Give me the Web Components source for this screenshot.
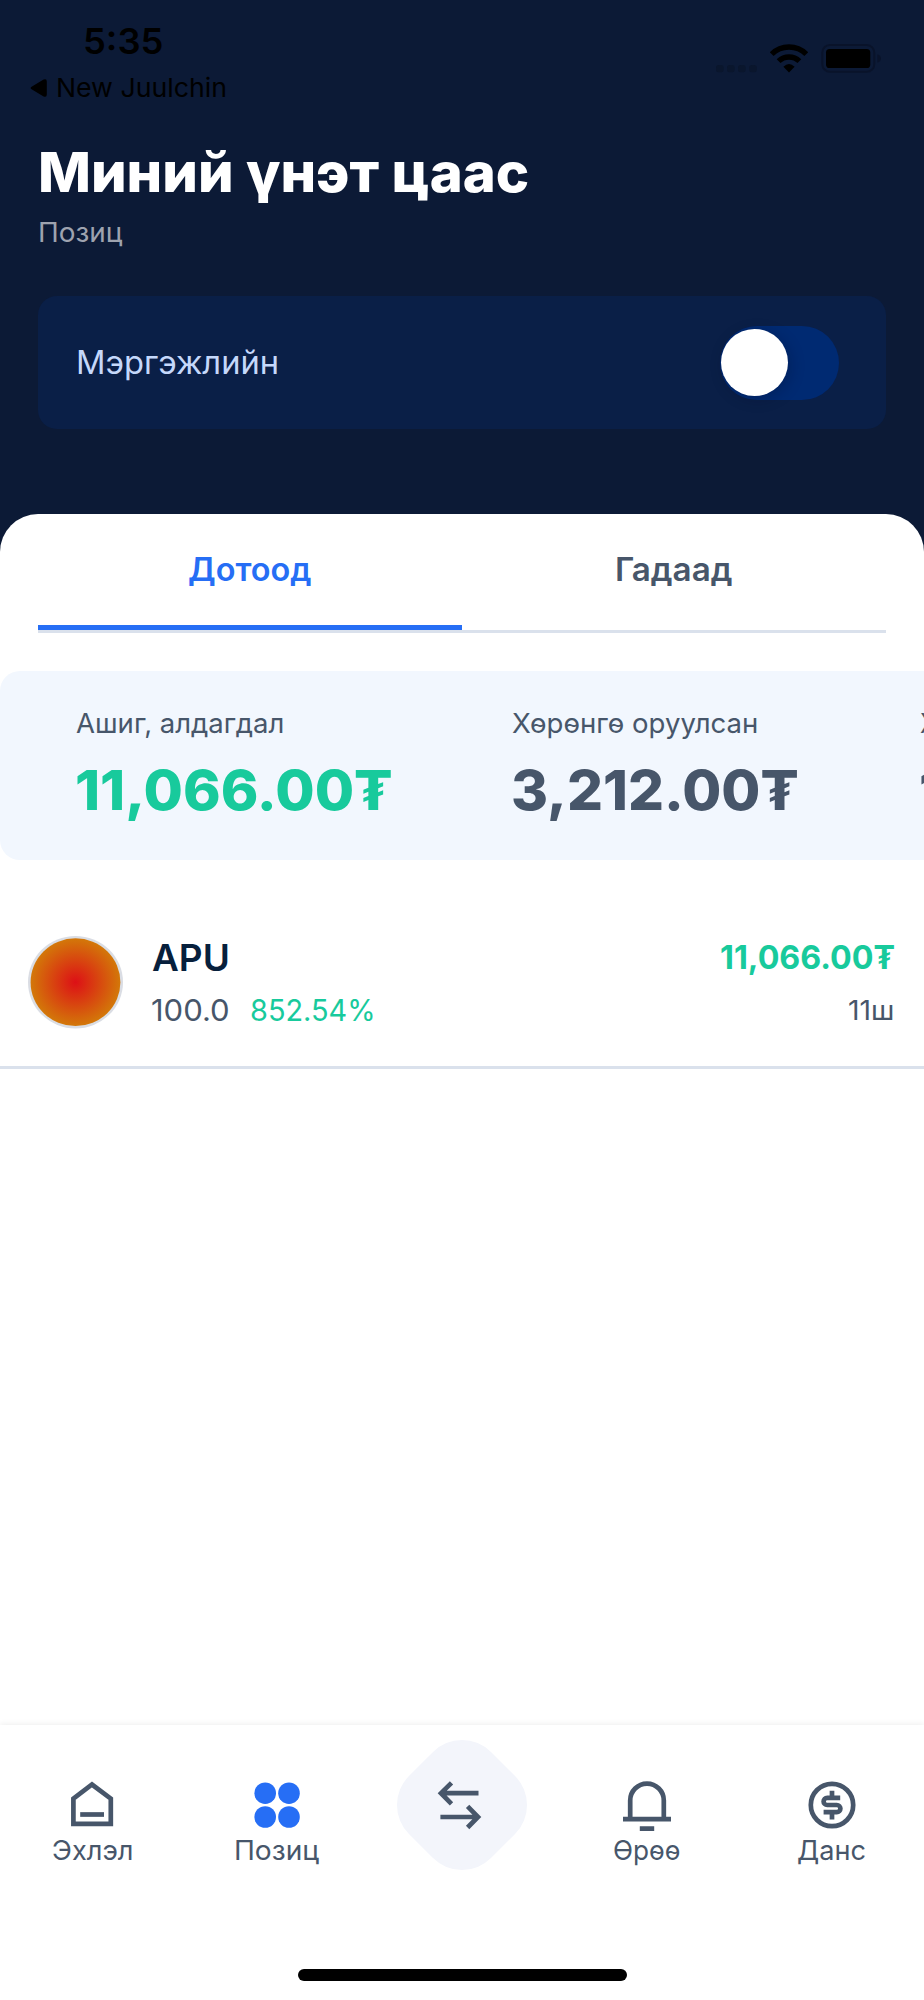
<!DOCTYPE html>
<html lang="mn">
<head>
<meta charset="utf-8">
<title>Миний үнэт цаас</title>
<style>
  html, body { margin: 0; background: #fff; overflow: hidden; }
  body { width: 924px; height: 2000px; font-family: Inter, Roboto, "Noto Sans", sans-serif; }
</style>
</head>
<body>
<portfolio-page></portfolio-page>

<script>
const define = (name, html, setup) => {
  const template = document.createElement('template');
  template.innerHTML = html.trim();
  customElements.define(name, class extends HTMLElement {
    constructor() {
      super();
      this.attachShadow({ mode: 'open' }).append(template.content.cloneNode(true));
    }
    connectedCallback() { if (setup) setup(this, this.shadowRoot); }
  });
};

/* A single line of text fitted to a given visible width; capitals sit in the middle of the line box. */
const pen = document.createElement('canvas').getContext('2d');
define('fit-text', `<style>
    :host { display: block; flex: none; white-space: nowrap; }
    span { display: block; width: max-content; transform-origin: 0 50%; }
  </style><span><slot></slot></span>`, (el, root) => {
  const size = el.getAttribute('size'), weight = el.getAttribute('weight') || 400;
  const line = el.getAttribute('line') || Math.round(size * 1.3);
  const width = +el.getAttribute('w');
  pen.font = `${weight} ${size}px Inter, Roboto, "Noto Sans", sans-serif`;
  const m = pen.measureText(el.textContent);
  const ratio = width / (m.actualBoundingBoxLeft + m.actualBoundingBoxRight);
  el.style.cssText += `;width:${width}px;height:${line}px;font-size:${size}px;font-weight:${weight};line-height:${line}px`;
  root.querySelector('span').style.transform =
    `translateX(${m.actualBoundingBoxLeft * ratio}px) scaleX(${ratio})`;
});

define('status-bar', `
  <style>
    :host { display: flex; justify-content: space-between; height: 124px; color: #000; }
    .left { padding: 21.5px 0 0 30px; }
    .time { margin-left: 54.7px; }
    .back { display: flex; align-items: center; gap: 10.5px; margin-top: 11.5px; }
    svg { display: block; }
    .right { padding: 40px 40px 0 0; }
  </style>
  <div class="left">
    <fit-text class="time" size="35.6" weight="600" line="40" w="77">5:35</fit-text>
    <div class="back">
      <svg width="17" height="18" viewBox="0 0 17 18"><path d="M2 7.4 13.6.6Q16.8-.8 16.8 2.6V15.4Q16.8 18.8 13.6 17.4L2 10.6Q-.8 9 2 7.4Z"/></svg>
      <fit-text size="26" weight="400" line="30" w="167.5">New Juulchin</fit-text>
    </div>
  </div>
  <svg class="right" width="170" height="40" viewBox="714 40 170 40">
    <g fill="#0a162d"><rect x="716" y="65" width="7.6" height="7.2" rx="2.5"/><rect x="727" y="65" width="7.6" height="7.2" rx="2.5"/><rect x="738" y="65" width="7.6" height="7.2" rx="2.5"/><rect x="749.2" y="65" width="7.6" height="7.2" rx="2.5"/></g>
    <g fill="none" stroke="#000" stroke-width="5.4">
      <path d="M771.7 54.2A24.5 24.5 0 0 1 806.3 54.2"/>
      <path d="M778.6 61.2A14.8 14.8 0 0 1 799.4 61.2"/>
    </g>
    <path d="M789 72.4 783.4 66.7Q789 61.5 794.6 66.7Z"/>
    <rect x="822.3" y="45" width="52" height="26.8" rx="7.6" fill="none" stroke="#09132a" stroke-width="2"/>
    <rect x="826" y="49" width="44.3" height="19" rx="3.6"/>
    <path d="M877.4 54.2Q881 55.5 881 58.5T877.4 62.8Z" fill="#09132a"/>
  </svg>`);

define('page-title', `
  <style>
    :host { display: block; padding: 8px 0 0 41px; color: #fff; }
    .sub { margin: 10.7px 0 0 -1px; color: #9ea3af; }
  </style>
  <fit-text size="54.8" weight="800" line="80" w="486.5">Миний үнэт цаас</fit-text>
  <fit-text class="sub" size="27.6" line="18" w="83">Позиц</fit-text>`);

define('toggle-switch', `
  <style>
    :host { display: block; box-sizing: border-box; width: 119px; height: 74px; border-radius: 37px; padding: 3.4px 1px;
      background: #002a72; }
    i { display: block; width: 67px; height: 67px; border-radius: 50%; background: #fff; box-shadow: 3px 3px 14px rgba(0,10,40,.25); }
  </style><i></i>`);

define('mode-card', `
  <style>
    :host { display: flex; box-sizing: border-box; align-items: center; justify-content: space-between; width: 848px; height: 133px;
      margin: 0 38px; padding: 0 47px 0 40px; border-radius: 19px; background: #0a1f47; color: #c5d8fb; }
  </style>
  <slot></slot><toggle-switch></toggle-switch>`);

define('market-tabs', `
  <style>
    :host { display: flex; box-sizing: border-box; width: 848px; height: 118.7px; margin: 0 38px; border-bottom: 3px solid #dae1ec;
      color: #47566a; }
    div { display: flex; box-sizing: border-box; flex: 1; justify-content: center; padding-top: 34.7px; }
    .on { color: #266ef5; border-bottom: 5px solid #266ef5; }
  </style>
  <div class="on"><fit-text size="32" weight="600" w="121.5">Дотоод</fit-text></div>
  <div><fit-text size="32" weight="600" w="114.5">Гадаад</fit-text></div>`);

define('stats-strip', `
  <style>
    :host { display: flex; box-sizing: border-box; width: 924px; height: 189.5px; margin-top: 37.5px; padding: 32.2px 0 0 76.3px;
      overflow: hidden; border-radius: 20px 0 0 20px; background: #f2f7fe; color: #47566a; }
    div { flex: none; width: 436px; }
    .third { margin-left: -28.3px; }
    .v { margin: 12.8px 0 0 .7px; }
    .up { color: #18ca9c; }
  </style>
  <div><fit-text size="27.6" line="40" w="206.5">Ашиг, алдагдал</fit-text>
    <fit-text class="v up" size="55.6" weight="800" line="70" w="314">11,066.00₮</fit-text></div>
  <div><fit-text size="27.6" line="40" w="245">Хөрөнгө оруулсан</fit-text>
    <fit-text class="v" size="55.6" weight="800" line="70" w="284">3,212.00₮</fit-text></div>
  <div class="third"><fit-text size="27.6" line="40" w="17">Х</fit-text>
    <fit-text class="v" size="55.6" weight="800" line="70" w="24">1</fit-text></div>`);

define('stock-row', `
  <style>
    :host { display: flex; box-sizing: border-box; width: 924px; height: 149px; margin-top: 59.5px; padding: 16.5px 29.5px 0 28px;
      border-bottom: 3px solid #dae1ec; color: #47566a; }
    svg { display: block; flex: none; width: 95px; height: 93px; margin-right: 28.8px; }
    .mid { flex: 1; padding-top: 2px; }
    .name { color: #07203c; }
    .line { display: flex; gap: 23.5px; margin-top: 12.4px; }
    .up { color: #18ca9c; }
    .end { display: flex; flex-direction: column; align-items: flex-end; padding-top: 1.8px; }
    .qty { margin: 13px 1.5px 0 0; }
  </style>
  <svg viewBox="0 0 95 93">
    <defs><radialGradient id="g"><stop offset="0" stop-color="#dd1016"/><stop offset="1" stop-color="#d37809"/></radialGradient></defs>
    <ellipse cx="47.5" cy="46.2" rx="47.5" ry="46.2" fill="#dadde4"/>
    <ellipse cx="47.5" cy="46.2" rx="44.9" ry="43.9" fill="url(#g)"/>
  </svg>
  <div class="mid">
    <fit-text class="name" size="36.4" weight="600" line="40" w="76">APU</fit-text>
    <div class="line"><fit-text size="29.5" line="40" w="76">100.0</fit-text>
      <fit-text class="up" size="29.5" line="40" w="121.7">852.54%</fit-text></div>
  </div>
  <div class="end">
    <fit-text class="up" size="32.4" weight="700" line="40" w="173.5">11,066.00₮</fit-text>
    <fit-text class="qty" size="27.2" line="40" w="44">11ш</fit-text>
  </div>`);

define('nav-item', `
  <style>
    :host { display: flex; flex: 1; flex-direction: column; align-items: center; gap: 2px; color: #47566a; }
    ::slotted(svg) { display: block; width: 56px; height: 56px; fill: none; stroke: currentColor; stroke-width: 4.7; overflow: visible; }
  </style>
  <slot name="icon"></slot><slot></slot>`);

define('bottom-nav', `
  <style>
    :host { display: flex; box-sizing: border-box; width: 924px; height: 244px; padding-top: 52px; background: #fff;
      box-shadow: 0 -1px 6px rgba(0,0,0,.07); clip-path: inset(-12px 0 0 0); }
  </style>
  <nav-item><svg slot="icon" viewBox="0 0 56 56"><path d="M9.4 21.6 28 7.5 46.8 21.6V46.9H9.4Z"/><path d="M16.2 37.5H40"/></svg>
    <fit-text size="27.4" line="30" w="78.7">Эхлэл</fit-text></nav-item>
  <nav-item><svg slot="icon" viewBox="0 0 56 56" style="fill:#266ef5;stroke:none"><circle cx="16.2" cy="16.2" r="10.8"/><circle cx="40" cy="16.2" r="10.8"/><circle cx="16.2" cy="40" r="10.8"/><circle cx="40" cy="40" r="10.8"/></svg>
    <fit-text size="27.4" line="30" w="82.7">Позиц</fit-text></nav-item>
  <nav-item><svg slot="icon" viewBox="0 0 56 56"><rect x="-30" y="-30" width="116" height="116" rx="41" transform="rotate(45 28 28)" fill="#f3f5fb" stroke="none"/><path d="M44.5 16.2H7M17.5 5.8 7 16.2 17.5 26.8M6.4 40H44M33.6 29.4 44 40 33.6 50.5"/></svg></nav-item>
  <nav-item><svg slot="icon" viewBox="0 0 56 56"><path d="M11.2 41.5V23.4a16.8 16.8 0 0 1 33.6 0V41.5M4 42.2H52M20.8 51.6H35.2"/></svg>
    <fit-text size="27.4" line="30" w="66">Өрөө</fit-text></nav-item>
  <nav-item><svg slot="icon" viewBox="0 0 56 56"><circle cx="28" cy="28" r="21.2"/><path d="M28 13.8V20M36.2 20.8H23.2a3.6 3.6 0 0 0 0 7.2H32.8a3.6 3.6 0 0 1 0 7.2H19.6M28 35.5V42.4"/></svg>
    <fit-text size="27.4" line="30" w="67.3">Данс</fit-text></nav-item>`);

define('home-indicator', `
  <style>:host { display: block; width: 329px; height: 12px; margin: 0 auto; border-radius: 6px; background: #000; }</style>`);

define('portfolio-page', `
  <style>
    :host { display: flex; flex-direction: column; width: 924px; height: 2000px; background: #fff; }
    header { height: 553px; flex: none; background: #0c1a36; }
    page-title { height: 172px; box-sizing: border-box; }
    main { flex: 1; margin-top: -38.7px; border-radius: 38px 38px 0 0; background: #fff; }
    bottom-nav { flex: none; }
    home-indicator { flex: none; margin-bottom: 19px; }
  </style>
  <header><status-bar></status-bar><page-title></page-title>
    <mode-card><fit-text size="32.2" w="199">Мэргэжлийн</fit-text></mode-card></header>
  <main><market-tabs></market-tabs><stats-strip></stats-strip><stock-row></stock-row></main>
  <bottom-nav></bottom-nav>
  <home-indicator></home-indicator>`);
</script>
</body>
</html>
